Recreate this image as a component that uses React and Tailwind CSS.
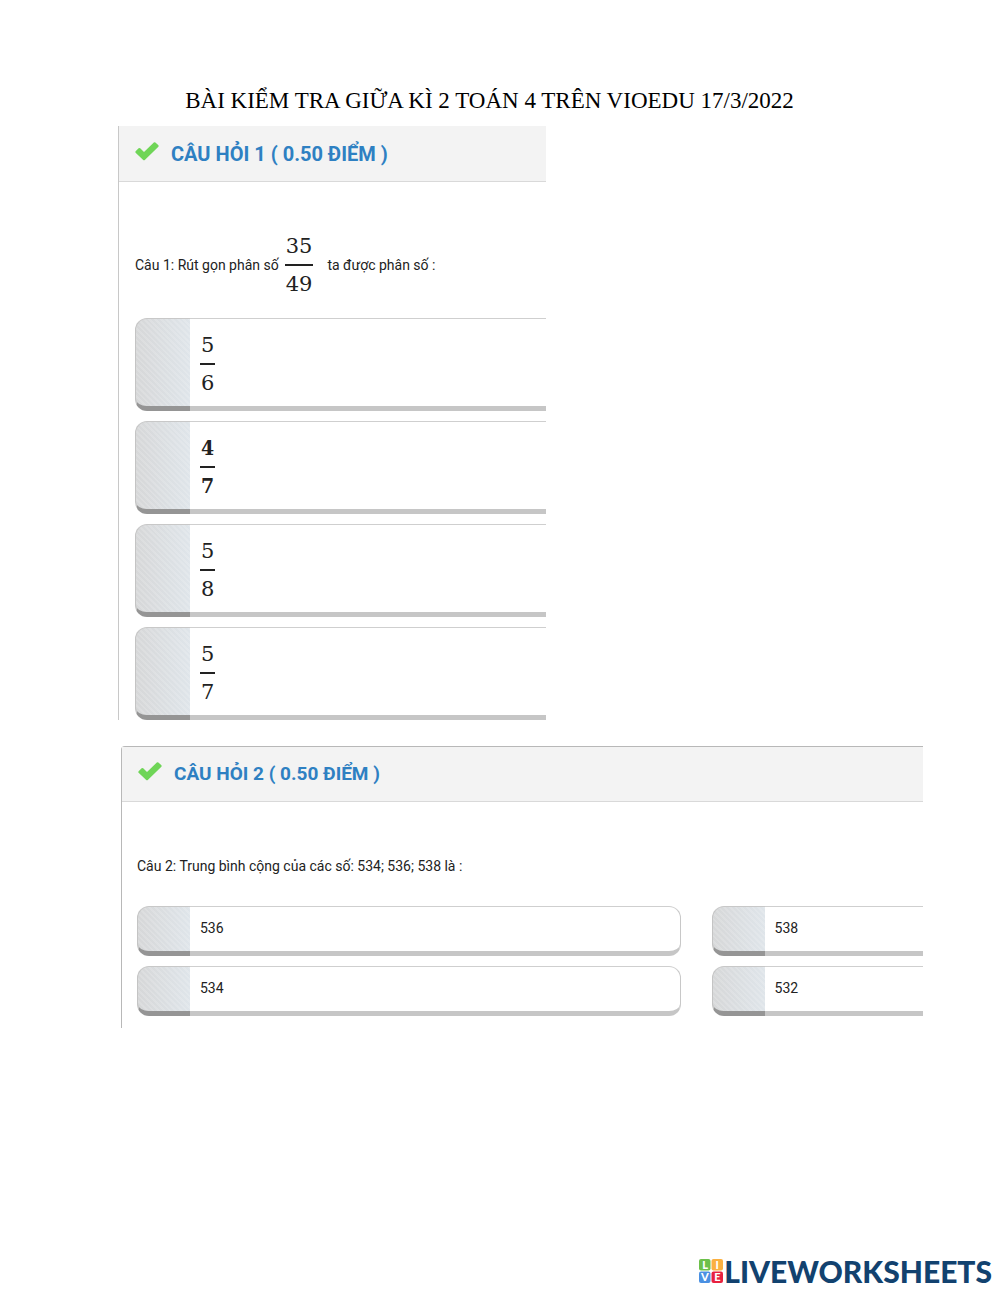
import React from 'react';
import clsx from 'clsx';

const fractionAnswers = [
  { top: '5', bottom: '6' },
  { top: '4', bottom: '7', bold: true },
  { top: '5', bottom: '8' },
  { top: '5', bottom: '7' },
];

const numberAnswers = ['536', '538', '534', '532'];

function CheckIcon() {
  return (
    <svg className="w-6 h-6 shrink-0" viewBox="0 0 24 24" aria-hidden="true">
      <path
        d="M.6 11.2 3.6 8.2Q4.4 7.6 5.2 8.2L9 11.9 18.8 2.5Q19.6 1.9 20.4 2.5L23.4 5.3Q24 6.1 23.4 6.8L9.8 20Q9 20.6 8.2 20L.6 12.8Q0 12 .6 11.2Z"
        fill="#6fd557"
      />
    </svg>
  );
}

function Fraction({ top, bottom, bold }) {
  return (
    <span
      className={clsx(
        'inline-flex flex-col items-center text-[21px] leading-9 text-[#222]',
        bold
          ? "font-['DejaVu_Serif_Condensed','DejaVu_Serif',serif]"
          : "font-['DejaVu_Serif',serif]"
      )}
    >
      <span className={clsx('px-px', bold && 'font-bold')}>{top}</span>
      <span className="w-full h-[2px] bg-[#222]" />
      <span className={clsx('px-px', bold && 'font-bold')}>{bottom}</span>
    </span>
  );
}

// `open` leaves the right edge without border and rounding
function Answer({ open, tall, children }) {
  return (
    <button type="button" className={clsx('flex w-full text-left', tall ? 'h-[93px]' : 'h-[50px]')}>
      <span
        className={clsx(
          'h-full shrink-0 rounded-l-xl border-l border-t border-b-[5px] border-l-[#c4c4c4] border-t-[#c8c8c8] border-b-[#959595]',
          'bg-[repeating-linear-gradient(45deg,#ffffff00_0_2px,#ffffff26_2px_4px),linear-gradient(to_right,#d6d7d8,#dfe5ea)]',
          tall ? 'w-[55px]' : 'w-[53px]'
        )}
      />
      <span
        className={clsx(
          'flex flex-1 h-full items-center border-t border-b-[5px] border-t-[#cfcfcf] border-b-[#c6c6c6] pl-[10px]',
          tall ? 'pt-[2px]' : 'pb-[2px]',
          !open && 'rounded-r-xl border-r border-r-[#c8c8c8]'
        )}
      >
        {children}
      </span>
    </button>
  );
}

function QuestionHeader({ title, small }) {
  return (
    <header
      className={clsx(
        'flex items-center gap-3 border-b border-[#d9d9d9] bg-[#f3f3f3] pl-4',
        small ? 'h-[55px]' : 'h-14'
      )}
    >
      <span className="pb-1">
        <CheckIcon />
      </span>
      <h2 className={clsx('leading-6 font-bold text-[#2e80c2]', small ? 'text-[19px]' : 'text-[20px]')}>{title}</h2>
    </header>
  );
}

function App() {
  return (
    <div className="flex min-h-screen flex-col bg-white font-[Roboto,sans-serif] text-sm text-[#222]">
      <main className="pl-[118px] pr-[77px] pt-[86px]">
        <h1 className="mb-[10px] pr-[62px] text-center font-['Liberation_Serif',serif] text-[23px] leading-[30px] text-black">
          BÀI KIỂM TRA GIỮA KÌ 2 TOÁN 4 TRÊN VIOEDU 17/3/2022
        </h1>

        <section className="max-w-[428px] border-l border-[#c8c8c8]">
          <QuestionHeader title="CÂU HỎI 1 ( 0.50 ĐIỂM )" />
          <div className="pl-4 pt-[46px]">
            <p className="flex items-center">
              <span>Câu 1: Rút gọn phân số</span>
              <span className="ml-[6px] mr-[14px]">
                <Fraction top="35" bottom="49" />
              </span>
              <span>ta được phân số :</span>
            </p>
            <div className="mt-4 flex flex-col gap-[10px]">
              {fractionAnswers.map((answer, i) => (
                <Answer key={i} tall open>
                  <Fraction {...answer} />
                </Answer>
              ))}
            </div>
          </div>
        </section>

        <section className="ml-[3px] mt-[26px] rounded-tl border-l border-t border-[#b8b8b8]">
          <QuestionHeader title="CÂU HỎI 2 ( 0.50 ĐIỂM )" small />
          <div className="pb-3 pl-[15px] pt-[52px]">
            <p className="leading-6">Câu 2: Trung bình cộng của các số: 534; 536; 538 là :</p>
            <div className="mt-7 grid grid-cols-[18fr_7fr] gap-x-[31px] gap-y-[10px]">
              {numberAnswers.map((answer, i) => (
                <Answer key={answer} open={i % 2 === 1}>
                  {answer}
                </Answer>
              ))}
            </div>
          </div>
        </section>
      </main>

      <footer className="mt-auto flex items-center justify-end gap-px pb-1 pr-2">
        <svg className="h-6 w-6" viewBox="0 0 24 24" aria-hidden="true">
          <rect width="11.5" height="11.5" rx="2" fill="#6cc04a" />
          <rect x="12.5" width="11.5" height="11.5" rx="2" fill="#fbb040" />
          <rect y="12.5" width="11.5" height="11.5" rx="2" fill="#4a90e2" />
          <rect x="12.5" y="12.5" width="11.5" height="11.5" rx="2" fill="#e8213f" />
          <g fill="#fff" fontFamily="Lato, sans-serif" fontSize="11" fontWeight="900" textAnchor="middle">
            <text x="6" y="9.7">L</text>
            <text x="18.2" y="9.7">I</text>
            <text x="5.8" y="22.2">V</text>
            <text x="18.3" y="22.2">E</text>
          </g>
        </svg>
        <span className="font-[Lato,sans-serif] text-[30px] leading-8 font-black text-[#12426f]">LIVEWORKSHEETS</span>
      </footer>
    </div>
  );
}

export default App;
